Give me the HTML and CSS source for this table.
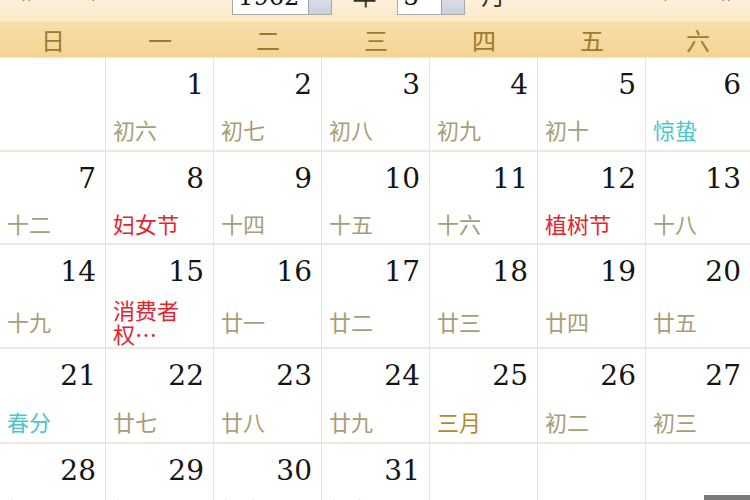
FILE: index.html
```html
<!DOCTYPE html>
<html lang="zh-CN">
<head>
<meta charset="utf-8">
<title>万年历 1962年3月</title>
<link rel="stylesheet" href="styles.css">
</head>
<body>
<div class="cal">
  <div class="topbar">
    <div class="nav">
      <span class="nv nv-first">«</span>
      <span class="nv nv-prev">‹</span>
      <span class="box ybox"><span class="val">1962</span><span class="btn"></span></span>
      <span class="unit nian">年</span>
      <span class="box mbox"><span class="val">3</span><span class="btn"></span></span>
      <span class="unit yue">月</span>
      <span class="nv nv-next">›</span>
      <span class="nv nv-last">»</span>
    </div>
  </div>
  <div class="week">
    <div>日</div><div>一</div><div>二</div><div>三</div><div>四</div><div>五</div><div>六</div>
  </div>
  <div class="grid">
    <div class="cell"></div>
    <div class="cell"><div class="num">1</div><div class="lunar"><span>初六</span></div></div>
    <div class="cell"><div class="num">2</div><div class="lunar"><span>初七</span></div></div>
    <div class="cell"><div class="num">3</div><div class="lunar"><span>初八</span></div></div>
    <div class="cell"><div class="num">4</div><div class="lunar"><span>初九</span></div></div>
    <div class="cell"><div class="num">5</div><div class="lunar"><span>初十</span></div></div>
    <div class="cell end"><div class="num">6</div><div class="lunar"><span class="term">惊蛰</span></div></div>

    <div class="cell"><div class="num">7</div><div class="lunar"><span>十二</span></div></div>
    <div class="cell"><div class="num">8</div><div class="lunar"><span class="fest">妇女节</span></div></div>
    <div class="cell"><div class="num">9</div><div class="lunar"><span>十四</span></div></div>
    <div class="cell"><div class="num">10</div><div class="lunar"><span>十五</span></div></div>
    <div class="cell"><div class="num">11</div><div class="lunar"><span>十六</span></div></div>
    <div class="cell"><div class="num">12</div><div class="lunar"><span class="fest">植树节</span></div></div>
    <div class="cell end"><div class="num">13</div><div class="lunar"><span>十八</span></div></div>

    <div class="cell"><div class="num">14</div><div class="lunar"><span>十九</span></div></div>
    <div class="cell"><div class="num">15</div><div class="lunar"><span class="fest">消费者权…</span></div></div>
    <div class="cell"><div class="num">16</div><div class="lunar"><span>廿一</span></div></div>
    <div class="cell"><div class="num">17</div><div class="lunar"><span>廿二</span></div></div>
    <div class="cell"><div class="num">18</div><div class="lunar"><span>廿三</span></div></div>
    <div class="cell"><div class="num">19</div><div class="lunar"><span>廿四</span></div></div>
    <div class="cell end"><div class="num">20</div><div class="lunar"><span>廿五</span></div></div>

    <div class="cell"><div class="num">21</div><div class="lunar"><span class="term">春分</span></div></div>
    <div class="cell"><div class="num">22</div><div class="lunar"><span>廿七</span></div></div>
    <div class="cell"><div class="num">23</div><div class="lunar"><span>廿八</span></div></div>
    <div class="cell"><div class="num">24</div><div class="lunar"><span>廿九</span></div></div>
    <div class="cell"><div class="num">25</div><div class="lunar"><span class="month">三月</span></div></div>
    <div class="cell"><div class="num">26</div><div class="lunar"><span>初二</span></div></div>
    <div class="cell end"><div class="num">27</div><div class="lunar"><span>初三</span></div></div>

    <div class="cell"><div class="num">28</div><div class="lunar"><span>初四</span></div></div>
    <div class="cell"><div class="num">29</div><div class="lunar"><span>初五</span></div></div>
    <div class="cell"><div class="num">30</div><div class="lunar"><span>初六</span></div></div>
    <div class="cell"><div class="num">31</div><div class="lunar"><span>初七</span></div></div>
    <div class="cell"></div>
    <div class="cell"></div>
    <div class="cell end"></div>
  </div>
</div>
<div class="wm"></div>
</body>
</html>
```

FILE: styles.css
```css
html, body {
  margin: 0;
  padding: 0;
}
body {
  width: 750px;
  height: 500px;
  overflow: hidden;
  background: #ffffff;
  font-family: "Noto Sans CJK SC", "Noto Sans", sans-serif;
  position: relative;
}
.cal {
  width: 750px;
}
.topbar {
  height: 22px;
  overflow: hidden;
  background: linear-gradient(#fdf1dc, #fbe8c5);
  border-bottom: 1px solid #f0d7a7;
}
.nav {
  display: flex;
  align-items: flex-end;
  height: 31px;
  margin-top: -16px;
}
.nv {
  font: 26px/20px "DejaVu Sans", sans-serif;
  color: #3a3020;
  align-self: flex-start;
  box-sizing: border-box;
}
.nv-first { width: 80px; padding-left: 16px; }
.nv-prev { width: 153px; padding-left: 6px; }
.nv-next { width: 58px; }
.nv-last { width: 30px; }
.box {
  display: flex;
  height: 28px;
  background: #ffffff;
  border: 1px solid #a9a9a9;
  box-sizing: border-box;
}
.box .val {
  flex: 1;
  font: 24px/18px "DejaVu Serif", serif;
  color: #111;
  padding-left: 5px;
}
.box .btn {
  width: 22px;
  background: linear-gradient(#e6eaf0, #c9d0da);
  border-left: 1px solid #9aa2ad;
}
.ybox { width: 100px; }
.mbox { width: 68px; }
.unit {
  font: 24px/22px "Noto Sans CJK SC", sans-serif;
  color: #3a3020;
  align-self: flex-start;
  box-sizing: border-box;
}
.nian { width: 66px; text-align: center; }
.yue { width: 198px; padding-left: 16px; }

.week {
  display: grid;
  grid-template-columns: 106px repeat(5, 108px) 104px;
  height: 34px;
  background: linear-gradient(#f8dea9, #f4d494);
  border-bottom: 1px solid #f1e4c8;
}
.week div {
  text-align: center;
  font: 24px/34px "Noto Sans CJK SC", sans-serif;
  color: #9c7a2e;
}

.grid {
  display: grid;
  grid-template-columns: 106px repeat(5, 108px) 104px;
  grid-template-rows: 94px 93px 104px 95px 80px;
}
.cell {
  display: flex;
  flex-direction: column;
  padding: 12px 9px 0 7px;
  border-right: 1px solid #e8e4da;
  border-bottom: 2px solid #ece8df;
  box-sizing: border-box;
  min-width: 0;
}
.cell.end {
  border-right: none;
}
.num {
  height: 30px;
  font: 28px/30px "DejaVu Serif", serif;
  color: #151515;
  text-align: right;
}
.lunar {
  flex: 1;
  display: flex;
  align-items: center;
  margin-top: 8px;
}
.lunar span {
  font-size: 22px;
  line-height: 24px;
  max-width: 3.3em;
  color: #a89d76;
}
.lunar .fest { color: #e2242f; }
.lunar .term { color: #4cc6c8; }
.lunar .month { color: #b38b2a; }

.wm {
  position: absolute;
  right: 0;
  bottom: 0;
  width: 46px;
  height: 5px;
  background: #7a7a7a;
}
```
